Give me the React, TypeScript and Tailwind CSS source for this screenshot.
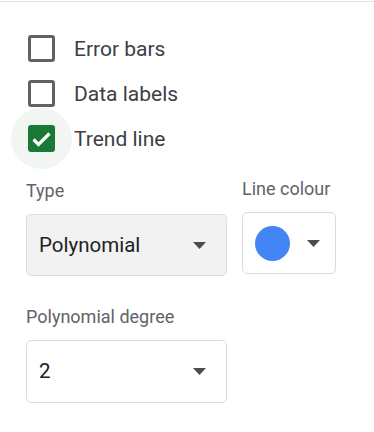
import React from 'react';

const Arrow: React.FC = () => (
    <svg width="13" height="7" viewBox="0 0 13 7" className="shrink-0">
        <path d="M0 0 L13 0 L6.5 7 Z" fill="#4a4d50" />
    </svg>
);

const Checkbox: React.FC<{ label: string; checked?: boolean }> = ({ label, checked }) => (
    <div className="h-[45px] flex items-center gap-[19px]">
        <div className="relative w-[27px] h-[27px] shrink-0">
            {checked && (
                <div className="absolute left-[-17px] top-[-17px] w-[61px] h-[61px] rounded-full bg-[#f1f6f2]" />
            )}
            {checked ? (
                <div className="relative w-[27px] h-[27px] rounded-[3px] bg-[#187a36] flex items-center justify-center">
                    <svg width="27" height="27" viewBox="0 0 27 27">
                        <polyline points="5.5,14.5 10.5,19.5 21.5,8.5" fill="none" stroke="white" strokeWidth="3.2" />
                    </svg>
                </div>
            ) : (
                <div className="w-[27px] h-[27px] rounded-[3px] border-[3px] border-[#5f6368]" />
            )}
        </div>
        <span className="relative text-[21px] leading-[24px] text-[#3c4043]">{label}</span>
    </div>
);

export default function App() {
    return (
        <div className="w-[374px] h-[432px] bg-white font-['Roboto',sans-serif] overflow-hidden">
            <div className="mt-px h-px bg-[#e0e0e0]" />
            <div className="pt-[24px] pl-[28px]">
                <Checkbox label="Error bars" />
                <Checkbox label="Data labels" />
                <Checkbox label="Trend line" checked />
            </div>

            <div className="flex items-start gap-[15px] pl-[26px] mt-[16px]">
                <div className="mt-[2px] w-[201px]">
                    <div className="text-[18px] leading-[24px] text-[#5f6368]">Type</div>
                    <div className="mt-[11px] h-[62px] rounded-[5px] border border-[#dadce0] bg-[#f2f2f2] flex items-center justify-between pl-[12px] pr-[20px]">
                        <span className="text-[20.5px] text-[#202124]">Polynomial</span>
                        <Arrow />
                    </div>

                    <div className="mt-[29px] text-[18px] leading-[24px] text-[#5f6368]">Polynomial degree</div>
                    <div className="mt-[11px] h-[63px] rounded-[5px] border border-[#dadce0] bg-white flex items-center justify-between pl-[12px] pr-[20px]">
                        <span className="text-[20.5px] text-[#202124]">2</span>
                        <Arrow />
                    </div>
                </div>

                <div className="w-[94px]">
                    <div className="text-[18px] leading-[24px] text-[#5f6368] whitespace-nowrap">Line colour</div>
                    <div className="mt-[11px] h-[62px] rounded-[5px] border border-[#dadce0] bg-white flex items-center pl-[12px] gap-[17px]">
                        <div className="w-[35px] h-[35px] rounded-full bg-[#4285f4]" />
                        <Arrow />
                    </div>
                </div>
            </div>
        </div>
    );
}
